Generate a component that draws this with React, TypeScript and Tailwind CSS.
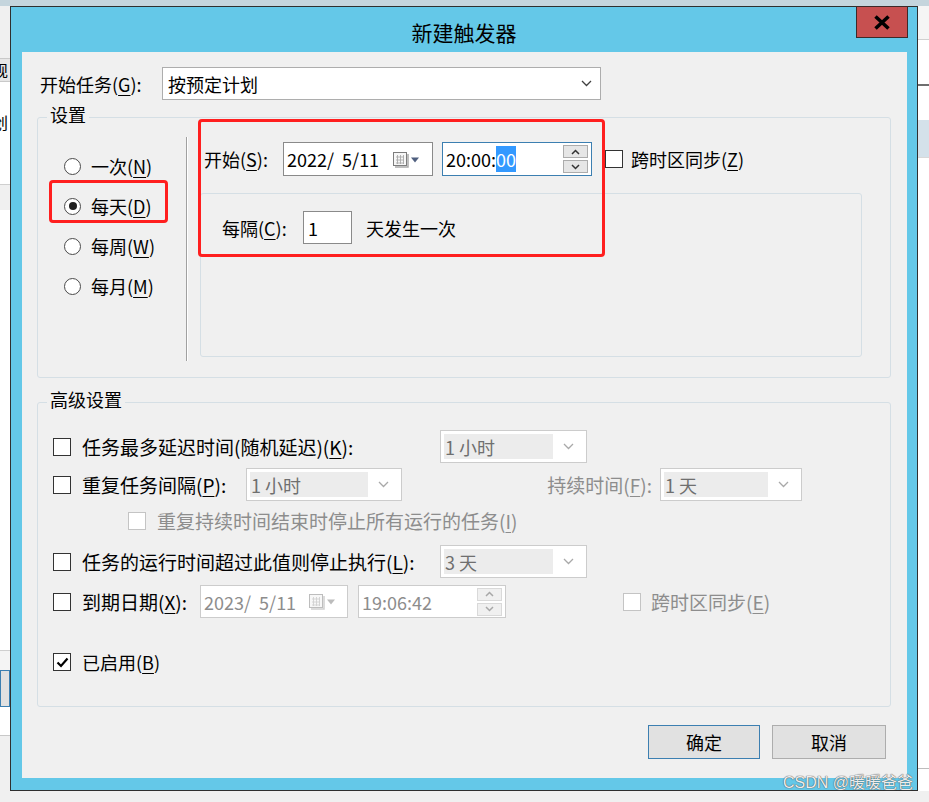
import type { ReactNode } from "react";

// ── Small drawings ────────────────────────────────────────────────────────────

function Chevron({ up = false, color = "#404040" }: { up?: boolean; color?: string }) {
    return (
        <svg width="11" height="7" viewBox="0 0 11 7" fill="none">
            <path d={up ? "M1 6l4.5-4.5L10 6" : "M1 1l4.5 4.5L10 1"} stroke={color} strokeWidth={1.3} />
        </svg>
    );
}

function SmallChevron({ up = false, color = "#333" }: { up?: boolean; color?: string }) {
    return (
        <svg width="9" height="6" viewBox="0 0 9 6" fill="none">
            <path d={up ? "M1 5l3.5-3.5L8 5" : "M1 1l3.5 3.5L8 1"} stroke={color} strokeWidth={1.5} />
        </svg>
    );
}

function CalendarIcon({ disabled = false }: { disabled?: boolean }) {
    const line = disabled ? "#bdbdbd" : "#7d7d7d";
    const grid = disabled ? "#d0d0d0" : "#a9a9a9";
    const tri = disabled ? "#bcbcbc" : "#4f5f7f";
    return (
        <svg width="28" height="17" viewBox="0 0 28 17" fill="none">
            <path d="M16 3v13H3" stroke={grid} strokeWidth={1.5} />
            <rect x="1.5" y="1.5" width="13" height="13" fill="#f7f7f7" stroke={line} />
            <path d="M4 6h8M4 9h8M4 12h8M5.5 4v9M8.5 4v9M11.5 4v9" stroke={grid} strokeWidth={0.9} />
            <path d="M19 6.5h8l-4 5z" fill={tri} />
        </svg>
    );
}

function CloseGlyph() {
    return (
        <svg width="18" height="15" viewBox="0 0 18 15" fill="none">
            <path d="M2.5 1.5l13 12M15.5 1.5l-13 12" stroke="#000" strokeWidth={3.6} />
        </svg>
    );
}

// ── Controls ──────────────────────────────────────────────────────────────────

function Mn({ label, k, colon = true }: { label: string; k: string; colon?: boolean }) {
    return (
        <>
            {label}(<span className="underline underline-offset-[3px]">{k}</span>){colon ? ":" : ""}
        </>
    );
}

function CheckBox({ checked = false, disabled = false }: { checked?: boolean; disabled?: boolean }) {
    return (
        <span
            className={
                disabled
                    ? "flex h-[18px] w-[18px] shrink-0 items-center justify-center border border-[#c4c4c4] bg-white"
                    : "flex h-[18px] w-[18px] shrink-0 items-center justify-center border border-[#333333] bg-white"
            }
        >
            {checked && (
                <svg width="13" height="11" viewBox="0 0 13 11" fill="none">
                    <path d="M1.5 5.5l3.5 3.5L11.5 1.5" stroke="#000" strokeWidth={2.2} />
                </svg>
            )}
        </span>
    );
}

function Radio({ checked = false }: { checked?: boolean }) {
    return (
        <span className="flex h-[17px] w-[17px] shrink-0 items-center justify-center rounded-full border border-[#4a4a4a] bg-white">
            {checked && <span className="h-[8px] w-[8px] rounded-full bg-[#1f1f1f]" />}
        </span>
    );
}

function DisabledCombo({ value, className }: { value: string; className: string }) {
    return (
        <div className={`flex h-[33px] shrink-0 items-stretch border border-[#cccccc] bg-white p-[3px] ${className}`}>
            <div className="flex flex-1 items-center bg-[#ececec] pl-[1px] text-[#6f6f6f]">{value}</div>
            <div className="flex w-[30px] items-center justify-center">
                <Chevron color="#a9a9a9" />
            </div>
        </div>
    );
}

function Spinner({ disabled = false }: { disabled?: boolean }) {
    const btn = disabled
        ? "flex h-[13px] w-[25px] items-center justify-center border border-[#d9d9d9] bg-[#f0f0f0]"
        : "flex h-[13px] w-[25px] items-center justify-center border border-[#acacac] bg-[#e6e6e6]";
    const color = disabled ? "#a8a8a8" : "#333";
    return (
        <div className="flex flex-col gap-[2px]">
            <div className={btn}>
                <SmallChevron up color={color} />
            </div>
            <div className={btn}>
                <SmallChevron color={color} />
            </div>
        </div>
    );
}

function RadioRow({ checked, children }: { checked?: boolean; children: ReactNode }) {
    return (
        <div className="flex h-[40px] items-center gap-[10px]">
            <Radio checked={checked} />
            <span>{children}</span>
        </div>
    );
}

// ── Background window pieces ──────────────────────────────────────────────────

function LeftStrip() {
    return (
        <div className="flex w-[10px] shrink-0 flex-col overflow-hidden text-[16px] leading-[20px]">
            <div className="h-[52px] bg-[#f0f0f0]" />
            <div className="flex h-[24px] items-center border-y border-[#c9c9c9] bg-[#e6e6e6]">
                <span className="-ml-[8px]">规</span>
            </div>
            <div className="h-[102px] bg-white pt-[30px]">
                <span className="-ml-[8px] block">创</span>
            </div>
            <div className="h-[26px] border-t border-[#cfcfcf] bg-[#f0f0f0]" />
            <div className="h-[440px] bg-white" />
            <div className="h-[20px] border-t border-[#cfcfcf] bg-[#f4f4f4]" />
            <div className="h-[37px] border border-[#3c7fb1] bg-[#e1e1e1]" />
            <div className="h-[28px] bg-white" />
            <div className="h-[56px] border-t border-[#c8c8c8] bg-[#f0f0f0]" />
        </div>
    );
}

function RightStrip() {
    return (
        <div className="flex w-[11px] shrink-0 flex-col">
            <div className="h-[34px] border-b border-[#d0d0d0] bg-[#f5f5f5]" />
            <div className="h-[46px] border-b-2 border-[#6e6e6e] bg-white" />
            <div className="h-[34px] bg-white" />
            <div className="h-[37px] bg-[#d4e1ea]" />
            <div className="h-[611px] border-t border-[#d8d8d8] bg-white" />
            <div className="h-[23px] border-t border-[#bdbdbd] bg-white" />
        </div>
    );
}

// ── Dialog ────────────────────────────────────────────────────────────────────

function Dialog() {
    return (
        <div className="flex h-[785px] w-[908px] shrink-0 flex-col border border-[#2f2f2f] bg-[#64c8e8]">
            {/* title bar */}
            <div className="grid h-[45px] shrink-0 grid-cols-[1fr_auto_1fr]">
                <div />
                <div className="pt-[11px] text-[21px] leading-[28px]">新建触发器</div>
                <div className="flex justify-end pr-[9px]">
                    <div className="-mt-px flex h-[32px] w-[52px] items-center justify-center border border-[#3d2a2a] bg-[#c75050]">
                        <CloseGlyph />
                    </div>
                </div>
            </div>

            {/* client area */}
            <div className="ml-[11px] mr-[10px] flex h-[726px] flex-col bg-[#f0f0f0]">
                <div className="mt-[15px] flex h-[33px] items-center pl-[18px]">
                    <span className="w-[122px] shrink-0">
                        <Mn label="开始任务" k="G" />
                    </span>
                    <div className="flex h-[33px] w-[439px] items-center border border-[#adadad] bg-white pl-[5px] pr-[8px]">
                        <span className="flex-1">按预定计划</span>
                        <Chevron />
                    </div>
                </div>

                {/* 设置 */}
                <fieldset className="ml-[15px] mr-[16px] mt-[7px] rounded-[3px] border border-[#d5dfe5]">
                    <legend className="relative -top-[3px] ml-[9px] px-[3px] leading-[20px]">设置</legend>
                    <div className="flex h-[250px]">
                        <div className="flex w-[148px] shrink-0 flex-col pl-[26px] pt-[19px]">
                            <RadioRow>
                                <Mn label="一次" k="N" colon={false} />
                            </RadioRow>
                            <RadioRow checked>
                                <Mn label="每天" k="D" colon={false} />
                            </RadioRow>
                            <RadioRow>
                                <Mn label="每周" k="W" colon={false} />
                            </RadioRow>
                            <RadioRow>
                                <Mn label="每月" k="M" colon={false} />
                            </RadioRow>
                        </div>
                        <div className="mb-[16px] mt-[10px] w-[2px] border-l border-r border-l-[#a0a0a0] border-r-white" />
                        <div className="flex flex-col pl-[12px] pt-[15px]">
                            <div className="flex h-[34px] items-center pl-[4px]">
                                <span className="w-[79px] shrink-0">
                                    <Mn label="开始" k="S" />
                                </span>
                                <div className="flex h-[34px] w-[150px] items-center border border-[#8a8a8a] bg-white pl-[3px] pr-[12px]">
                                    <span className="flex-1 whitespace-pre">2022/  5/11</span>
                                    <CalendarIcon />
                                </div>
                                <div className="ml-[9px] flex h-[34px] w-[150px] items-center border border-[#3c7fb1] bg-white pl-[3px] pr-[3px]">
                                    <span className="flex-1">
                                        20:00:<span className="bg-[#3399ff] text-white">00</span>
                                    </span>
                                    <Spinner />
                                </div>
                                <span className="ml-[13px]">
                                    <CheckBox />
                                </span>
                                <span className="ml-[8px]">
                                    <Mn label="跨时区同步" k="Z" colon={false} />
                                </span>
                            </div>
                            <div className="mt-[17px] h-[164px] w-[662px] rounded-[3px] border border-[#d5dfe5] pl-[21px] pt-[17px]">
                                <div className="flex h-[33px] items-center">
                                    <span className="w-[81px] shrink-0">
                                        <Mn label="每隔" k="C" />
                                    </span>
                                    <div className="flex h-[33px] w-[49px] items-center border border-[#8a8a8a] bg-white pl-[4px]">1</div>
                                    <span className="ml-[14px]">天发生一次</span>
                                </div>
                            </div>
                        </div>
                    </div>
                </fieldset>

                {/* 高级设置 */}
                <fieldset className="ml-[15px] mr-[16px] mt-[14px] rounded-[3px] border border-[#d5dfe5]">
                    <legend className="relative -top-[3px] ml-[9px] px-[3px] leading-[20px]">高级设置</legend>
                    <div className="flex h-[294px] flex-col pl-[15px] pt-[18px]">
                        <div className="flex h-[33px] items-center">
                            <CheckBox />
                            <span className="ml-[11px] w-[358px] shrink-0 text-[19px]">
                                <Mn label="任务最多延迟时间(随机延迟)" k="K" />
                            </span>
                            <DisabledCombo value="1 小时" className="w-[147px]" />
                        </div>
                        <div className="mt-[5px] flex h-[33px] items-center">
                            <CheckBox />
                            <span className="ml-[11px] w-[164px] shrink-0 text-[19px]">
                                <Mn label="重复任务间隔" k="P" />
                            </span>
                            <DisabledCombo value="1 小时" className="w-[156px]" />
                            <span className="w-[258px] shrink-0 pr-[8px] text-right text-[19px] text-[#8d8d8d]">
                                <Mn label="持续时间" k="F" />
                            </span>
                            <DisabledCombo value="1 天" className="w-[142px]" />
                        </div>
                        <div className="mt-[8px] flex h-[24px] items-center pl-[75px] text-[19px] text-[#8d8d8d]">
                            <CheckBox disabled />
                            <span className="ml-[11px]">
                                <Mn label="重复持续时间结束时停止所有运行的任务" k="I" colon={false} />
                            </span>
                        </div>
                        <div className="mt-[12px] flex h-[33px] items-center">
                            <CheckBox />
                            <span className="ml-[11px] w-[358px] shrink-0 text-[19px]">
                                <Mn label="任务的运行时间超过此值则停止执行" k="L" />
                            </span>
                            <DisabledCombo value="3 天" className="w-[147px]" />
                        </div>
                        <div className="mt-[7px] flex h-[33px] items-center">
                            <CheckBox />
                            <span className="ml-[11px] w-[118px] shrink-0 text-[19px]">
                                <Mn label="到期日期" k="X" />
                            </span>
                            <div className="flex h-[33px] w-[148px] items-center border border-[#cccccc] bg-white pl-[3px] pr-[11px] text-[#8d8d8d]">
                                <span className="flex-1 whitespace-pre">2023/  5/11</span>
                                <CalendarIcon disabled />
                            </div>
                            <div className="ml-[10px] flex h-[33px] w-[148px] items-center border border-[#cccccc] bg-white pl-[3px] pr-[3px] text-[#8d8d8d]">
                                <span className="flex-1">19:06:42</span>
                                <Spinner disabled />
                            </div>
                            <span className="ml-[117px]">
                                <CheckBox disabled />
                            </span>
                            <span className="ml-[10px] text-[19px] text-[#8d8d8d]">
                                <Mn label="跨时区同步" k="E" colon={false} />
                            </span>
                        </div>
                        <div className="mt-[32px] flex h-[24px] items-center">
                            <CheckBox checked />
                            <span className="ml-[11px]">
                                <Mn label="已启用" k="B" colon={false} />
                            </span>
                        </div>
                    </div>
                </fieldset>

                <div className="mt-[18px] flex justify-end gap-[12px] pr-[21px]">
                    <button className="flex h-[34px] w-[112px] items-center justify-center border border-[#3c7fb1] bg-[#e1e1e1]">
                        确定
                    </button>
                    <button className="flex h-[34px] w-[114px] items-center justify-center border border-[#adadad] bg-[#e1e1e1]">
                        取消
                    </button>
                </div>
            </div>
        </div>
    );
}

// ── Page ──────────────────────────────────────────────────────────────────────

export default function App() {
    return (
        <div className="relative flex h-[802px] w-[929px] flex-col overflow-hidden bg-[#f0f0f0] font-['Noto_Sans_CJK_SC',sans-serif] text-[18px] leading-[24px] text-black">
            <div className="h-[6px] shrink-0 bg-[#c5d5dd]" />
            <div className="flex">
                <LeftStrip />
                <Dialog />
                <RightStrip />
            </div>

            {/* red annotation boxes */}
            <div className="pointer-events-none absolute left-[49px] top-[180px] h-[43px] w-[119px] rounded-[4px] border-[3px] border-[#ff1f1f]" />
            <div className="pointer-events-none absolute left-[198px] top-[119px] h-[138px] w-[407px] rounded-[4px] border-[3px] border-[#ff1f1f]" />

            {/* watermark */}
            <div className="pointer-events-none absolute bottom-[10px] right-[16px] font-['Liberation_Sans','Noto_Sans_CJK_SC',sans-serif] text-[16px] leading-[18px] text-white/90 [text-shadow:0_0_1px_#4a4a4a,0_0_1px_#4a4a4a]">
                CSDN @暖暖爸爸
            </div>
        </div>
    );
}
